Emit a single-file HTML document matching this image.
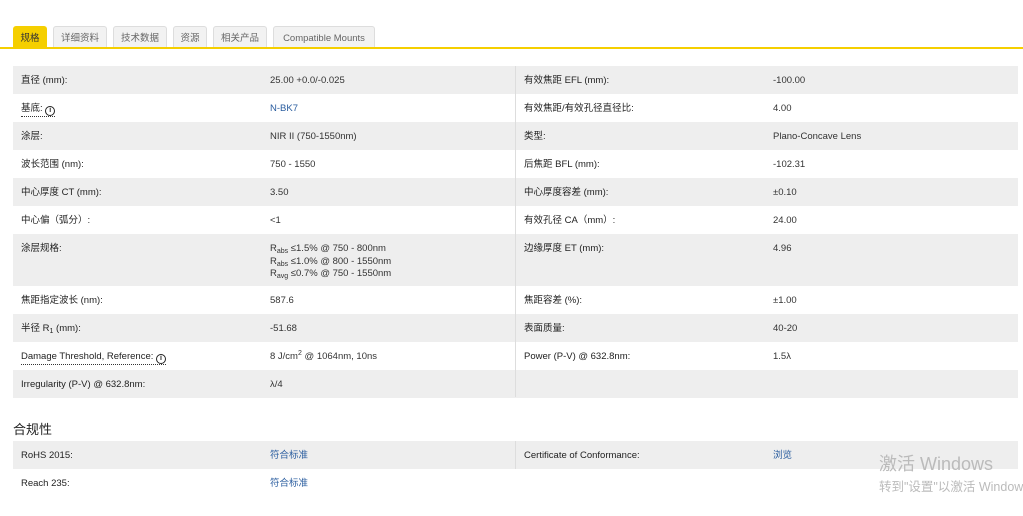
<!DOCTYPE html>
<html><head><meta charset="utf-8"><style>
*{margin:0;padding:0;box-sizing:border-box}
body{width:1023px;height:516px;background:#fff;font-family:"Liberation Sans","Noto Sans CJK SC",sans-serif;font-size:9.5px;color:#333;position:relative;overflow:hidden}
.tab{position:absolute;top:26px;height:22px;line-height:24px;text-align:center;background:#f2f2f2;border:1px solid #ddd;border-bottom:none;border-radius:3px 3px 0 0;color:#666;font-size:9.5px}
.tab.on{background:#f5cf00;border-color:#f5cf00;color:#333}
.line{position:absolute;top:47px;left:0;width:1023px;height:2px;background:#f5cf00}
.row{position:absolute;left:13px;width:1005px;height:28px}
.g{background:#eee}
.row span{position:absolute;top:9px;white-space:nowrap;line-height:12px}
.c1{left:8px;color:#222}.c2{left:257px}.c3{left:511px;color:#222}.c4{left:760px}
.div{position:absolute;left:515px;top:66px;width:1px;height:331px;background:#ddd}
a{color:#2a5d9f;text-decoration:none}
.u{border-bottom:1px dotted #333}
sub{font-size:7px;vertical-align:-2px;line-height:0}
sup{line-height:0}
.i{display:inline-block;width:10px;height:10px;border:1.3px solid #222;border-radius:50%;font-size:7px;line-height:8px;text-align:center;font-weight:bold;font-style:normal;vertical-align:-1px}
</style></head><body>
<div class="tab on" style="left:13px;width:34px">规格</div>
<div class="tab" style="left:53px;width:54px">详细资料</div>
<div class="tab" style="left:113px;width:54px">技术数据</div>
<div class="tab" style="left:173px;width:34px">资源</div>
<div class="tab" style="left:213px;width:54px">相关产品</div>
<div class="tab" style="left:273px;width:102px">Compatible Mounts</div>
<div class="line"></div>

<div class="row g" style="top:66px"><span class="c1">直径 (mm):</span><span class="c2">25.00 +0.0/-0.025</span><span class="c3">有效焦距 EFL (mm):</span><span class="c4">-100.00</span></div>
<div class="row" style="top:94px"><span class="c1 u">基底: <i class="i">i</i></span><span class="c2"><a>N-BK7</a></span><span class="c3">有效焦距/有效孔径直径比:</span><span class="c4">4.00</span></div>
<div class="row g" style="top:122px"><span class="c1">涂层:</span><span class="c2">NIR II (750-1550nm)</span><span class="c3">类型:</span><span class="c4">Plano-Concave Lens</span></div>
<div class="row" style="top:150px"><span class="c1">波长范围 (nm):</span><span class="c2">750 - 1550</span><span class="c3">后焦距 BFL (mm):</span><span class="c4">-102.31</span></div>
<div class="row g" style="top:178px"><span class="c1">中心厚度 CT (mm):</span><span class="c2">3.50</span><span class="c3">中心厚度容差 (mm):</span><span class="c4">±0.10</span></div>
<div class="row" style="top:206px"><span class="c1">中心偏（弧分）:</span><span class="c2">&lt;1</span><span class="c3">有效孔径 CA（mm）:</span><span class="c4">24.00</span></div>
<div class="row g" style="top:234px;height:52px"><span class="c1">涂层规格:</span><span class="c2" style="line-height:12.5px">R<sub>abs</sub> ≤1.5% @ 750 - 800nm<br>R<sub>abs</sub> ≤1.0% @ 800 - 1550nm<br>R<sub>avg</sub> ≤0.7% @ 750 - 1550nm</span><span class="c3">边缘厚度 ET (mm):</span><span class="c4">4.96</span></div>
<div class="row" style="top:286px"><span class="c1">焦距指定波长 (nm):</span><span class="c2">587.6</span><span class="c3">焦距容差 (%):</span><span class="c4">±1.00</span></div>
<div class="row g" style="top:314px"><span class="c1">半径 R<sub>1</sub> (mm):</span><span class="c2">-51.68</span><span class="c3">表面质量:</span><span class="c4">40-20</span></div>
<div class="row" style="top:342px"><span class="c1 u">Damage Threshold, Reference: <i class="i">i</i></span><span class="c2">8 J/cm<sup style="font-size:7px">2</sup> @ 1064nm, 10ns</span><span class="c3">Power (P-V) @ 632.8nm:</span><span class="c4">1.5λ</span></div>
<div class="row g" style="top:370px"><span class="c1">Irregularity (P-V) @ 632.8nm:</span><span class="c2">λ/4</span></div>
<div class="div"></div>

<div style="position:absolute;left:13px;top:419px;font-size:13px;color:#222">合规性</div>
<div class="row g" style="top:441px"><span class="c1">RoHS 2015:</span><span class="c2"><a>符合标准</a></span><span class="c3">Certificate of Conformance:</span><span class="c4"><a>浏览</a></span></div>
<div class="row" style="top:469px"><span class="c1">Reach 235:</span><span class="c2"><a>符合标准</a></span></div>
<div style="position:absolute;left:515px;top:441px;width:1px;height:28px;background:#ddd"></div>

<div style="position:absolute;left:879px;top:450px;font-size:18px;color:#bbb;white-space:nowrap">激活 Windows</div>
<div style="position:absolute;left:879px;top:476px;font-size:12.5px;color:#bbb;white-space:nowrap">转到"设置"以激活 Windows</div>
</body></html>
